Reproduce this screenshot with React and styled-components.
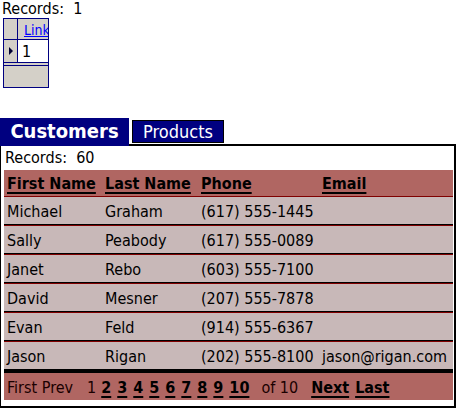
import React from "react";
import styled, { createGlobalStyle } from "styled-components";

const GlobalStyle = createGlobalStyle`
  html, body {
    margin: 0;
    padding: 0;
    background: #fff;
  }
  body {
    font-family: "DejaVu Sans Condensed", "DejaVu Sans", Verdana, sans-serif;
    font-size: 16px;
    color: #000;
  }
`;

const Page = styled.div`
  width: 457px;
  height: 410px;
  overflow: hidden;
`;

const Records = styled.div`
  padding-left: ${(p) => p.$left || 2}px;
  height: 18px;
  line-height: 18px;
  white-space: pre;
`;

/* small data grid at the top */
const Grid = styled.table`
  margin-left: 3px;
  border: 1px solid #000080;
  border-collapse: separate;
  border-spacing: 0;
  width: 46px;
  table-layout: fixed;
  background: #d4d0c8;
`;

const GridCell = styled.td`
  padding: 0;
  height: ${(p) => p.$h}px;
  width: ${(p) => p.$w}px;
  background: ${(p) => (p.$white ? "#fff" : "#d4d0c8")};
  border-right: ${(p) => (p.$divider ? "1px solid #000080" : "none")};
  border-bottom: ${(p) => (p.$bottom ? "1px solid #000080" : "none")};
  overflow: hidden;
  white-space: nowrap;
  vertical-align: middle;
`;

const GridFooter = styled.td`
  padding: 0;
  height: 21px;
  border-top: 4px double #000080;
  background: #d4d0c8;
`;

const GridLink = styled.a`
  color: #0000ff;
  text-decoration: underline;
  font-size: 14px;
  padding-left: 6px;
`;

const GridValue = styled.span`
  padding-left: 4px;
`;

const Arrow = styled.span`
  display: block;
  width: 0;
  height: 0;
  margin-left: 5px;
  border-top: 4px solid transparent;
  border-bottom: 4px solid transparent;
  border-left: 4px solid #000033;
`;

/* tabs */
const Tabs = styled.div`
  display: flex;
  align-items: flex-end;
  gap: 3px;
  margin-top: 30px;
  height: 26px;
`;

const Tab = styled.div`
  position: relative;
  z-index: 1;
  background: #000080;
  color: #fff;
  font-weight: ${(p) => (p.$active ? "bold" : "normal")};
  font-size: ${(p) => (p.$active ? 20 : 18)}px;
  height: ${(p) => (p.$active ? 28 : 23)}px;
  line-height: ${(p) => (p.$active ? 26 : 21)}px;
  width: ${(p) => p.$w}px;
  box-sizing: border-box;
  text-align: center;
  white-space: nowrap;
  border: ${(p) => (p.$active ? "none" : "1px solid #000")};
  margin-bottom: ${(p) => (p.$active ? -2 : 1)}px;
`;

const Panel = styled.div`
  border-style: solid;
  border-color: #000;
  border-width: 2px 2px 2px 1px;
  width: 456px;
  height: 264px;
  box-sizing: border-box;
  padding: 3px 1px 0 3px;
`;

const Table = styled.table`
  width: 449px;
  border-collapse: separate;
  border-spacing: 0;
  table-layout: fixed;
  margin-top: 3px;
`;

const HeadCell = styled.th`
  background: #b06662;
  text-align: left;
  padding: 1px 0 0 3px;
  height: 25px;
  width: ${(p) => p.$w}px;
  font-weight: bold;
  white-space: nowrap;
  vertical-align: middle;

  a {
    color: #000;
    text-decoration: underline;
    text-decoration-thickness: 2px;
    text-underline-offset: 3px;
  }
`;

const Row = styled.tr`
  td {
    background: #c8b8b8;
    border-top: 1px solid #800000;
    border-bottom: 1px solid #000;
    height: 26px;
    padding: 1px 0 0 3px;
    white-space: nowrap;
    overflow: hidden;
    vertical-align: middle;
  }
`;

const Pager = styled.td`
  background: #b06662;
  border-top: 3px solid #000;
  height: 26px;
  padding: 1px 0 0 3px;
  white-space: pre;
  vertical-align: middle;
  color: #1a0000;
`;

const PagerText = styled.span`
  margin-right: ${(p) => p.$gap}px;
`;

const PageLink = styled.a`
  color: #000;
  font-weight: bold;
  text-decoration: underline;
  text-decoration-thickness: 2px;
  text-underline-offset: 3px;
  margin-right: ${(p) => p.$gap}px;
`;

const columns = [
  { label: "First Name", w: 95 },
  { label: "Last Name", w: 93 },
  { label: "Phone", w: 118 },
  { label: "Email", w: 131 },
];

const customers = [
  ["Michael", "Graham", "(617) 555-1445", ""],
  ["Sally", "Peabody", "(617) 555-0089", ""],
  ["Janet", "Rebo", "(603) 555-7100", ""],
  ["David", "Mesner", "(207) 555-7878", ""],
  ["Evan", "Feld", "(914) 555-6367", ""],
  ["Jason", "Rigan", "(202) 555-8100", "jason@rigan.com"],
];

const pages = ["2", "3", "4", "5", "6", "7", "8", "9", "10"];

export default function App() {
  return (
    <Page>
      <GlobalStyle />
      <Records>Records:  1</Records>
      <Grid>
        <tbody>
          <tr>
            <GridCell $w={13} $h={20} $divider $bottom />
            <GridCell $h={20} $bottom>
              <GridLink href="#">Link</GridLink>
            </GridCell>
          </tr>
          <tr>
            <GridCell $w={13} $h={22} $divider>
              <Arrow />
            </GridCell>
            <GridCell $h={22} $white>
              <GridValue>1</GridValue>
            </GridCell>
          </tr>
          <tr>
            <GridFooter colSpan={2} />
          </tr>
        </tbody>
      </Grid>

      <Tabs>
        <Tab $active $w={129}>Customers</Tab>
        <Tab $w={92}>Products</Tab>
      </Tabs>
      <Panel>
        <Records $left={1}>Records:  60</Records>
        <Table>
          <thead>
            <tr>
              {columns.map((c) => (
                <HeadCell key={c.label} $w={c.w}>
                  <a href="#">{c.label}</a>
                </HeadCell>
              ))}
            </tr>
          </thead>
          <tbody>
            {customers.map((r) => (
              <Row key={r[0]}>
                {r.map((v, i) => (
                  <td key={i}>{v}</td>
                ))}
              </Row>
            ))}
            <tr>
              <Pager colSpan={4}>
                <PagerText $gap={14}>First Prev</PagerText>
                <PagerText $gap={5}>1</PagerText>
                {pages.map((p) => (
                  <PageLink key={p} href="#" $gap={p === "10" ? 12 : 6}>
                    {p}
                  </PageLink>
                ))}
                <PagerText $gap={13}>of 10</PagerText>
                <PageLink href="#" $gap={6}>Next</PageLink>
                <PageLink href="#" $gap={0}>Last</PageLink>
              </Pager>
            </tr>
          </tbody>
        </Table>
      </Panel>
    </Page>
  );
}
